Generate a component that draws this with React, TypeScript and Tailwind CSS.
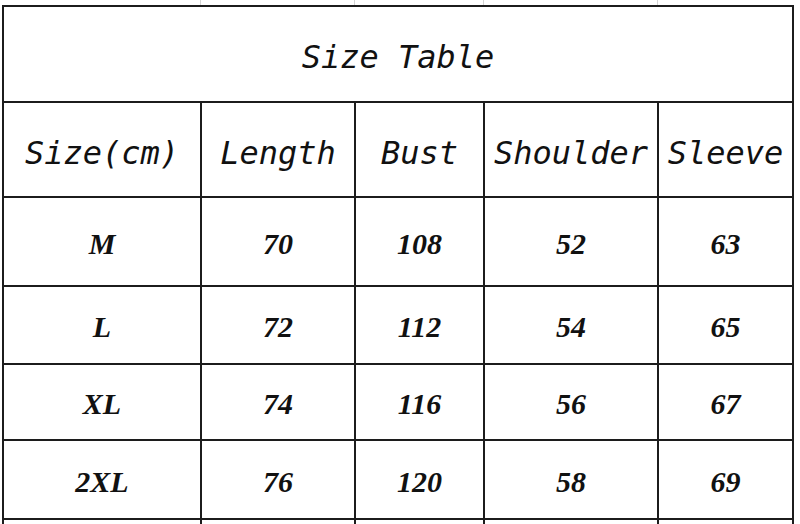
const headers = ["Size(cm)", "Length", "Bust", "Shoulder", "Sleeve"];

const rows = [
  { size: "M", values: ["70", "108", "52", "63"], h: "h-[87px]" },
  { size: "L", values: ["72", "112", "54", "65"], h: "h-[76px]" },
  { size: "XL", values: ["74", "116", "56", "67"], h: "h-[74px]" },
  { size: "2XL", values: ["76", "120", "58", "69"], h: "h-[77px]" },
];

const mono = "font-['DejaVu_Sans_Mono',monospace] italic text-[32px] text-[#111]";
const serif = "font-['Liberation_Serif',serif] italic font-bold text-[30px] text-[#111]";

export default function App() {
  return (
    <main className="h-[524px] w-[800px] overflow-hidden bg-white">
      {/* faint lines of the table above */}
      <div className="flex h-[5px]">
        <div className="w-[200px]" />
        <div className="w-px bg-[#d4d4d4]" />
        <div className="w-[153px]" />
        <div className="w-px bg-[#d4d4d4]" />
        <div className="w-[128px]" />
        <div className="w-px bg-[#d4d4d4]" />
        <div className="w-[173px]" />
        <div className="w-px bg-[#d4d4d4]" />
      </div>

      <div className="ml-[2px] grid w-[792px] grid-cols-[196px_152px_127px_172px_133px] gap-[2px] bg-[#1c1c1c] p-[2px]">
        <div className={`col-span-5 flex h-[94px] items-center justify-center bg-white pt-[5px] ${mono}`}>
          Size Table
        </div>

        {headers.map((h) => (
          <div key={h} className={`flex h-[93px] items-center justify-center bg-white pt-[6px] ${mono}`}>
            {h}
          </div>
        ))}

        {rows.map((row) =>
          [row.size, ...row.values].map((v, i) => (
            <div
              key={row.size + i}
              className={`flex ${row.h} items-center justify-center bg-white pt-[3px] ${serif}`}
            >
              {v}
            </div>
          ))
        )}

        {headers.map((h) => (
          <div key={"end" + h} className="h-[4px] bg-white" />
        ))}
      </div>
    </main>
  );
}
